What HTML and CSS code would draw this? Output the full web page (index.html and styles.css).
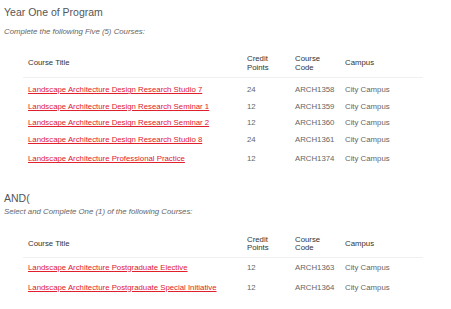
FILE: index.html
```html
<!DOCTYPE html>
<html>
<head>
<meta charset="utf-8">
<link rel="stylesheet" href="styles.css">
</head>
<body>
<h2 class="title">Year One of Program</h2>
<p class="intro">Complete the following Five (5) Courses:</p>
<table class="courses t1">
  <colgroup><col class="c1"><col class="c2"><col class="c3"><col class="c4"></colgroup>
  <thead>
    <tr><th>Course Title</th><th>Credit<br>Points</th><th>Course<br>Code</th><th>Campus</th></tr>
  </thead>
  <tbody>
    <tr><td><a href="#">Landscape Architecture Design Research Studio 7</a></td><td>24</td><td>ARCH1358</td><td>City Campus</td></tr>
    <tr><td><a href="#">Landscape Architecture Design Research Seminar 1</a></td><td>12</td><td>ARCH1359</td><td>City Campus</td></tr>
    <tr><td><a href="#">Landscape Architecture Design Research Seminar 2</a></td><td>12</td><td>ARCH1360</td><td>City Campus</td></tr>
    <tr><td><a href="#">Landscape Architecture Design Research Studio 8</a></td><td>24</td><td>ARCH1361</td><td>City Campus</td></tr>
    <tr class="last"><td><a href="#">Landscape Architecture Professional Practice</a></td><td>12</td><td>ARCH1374</td><td>City Campus</td></tr>
  </tbody>
</table>
<h2 class="title and">AND(</h2>
<p class="intro intro2">Select and Complete One (1) of the following Courses:</p>
<table class="courses t2">
  <colgroup><col class="c1"><col class="c2"><col class="c3"><col class="c4"></colgroup>
  <thead>
    <tr><th>Course Title</th><th>Credit<br>Points</th><th>Course<br>Code</th><th>Campus</th></tr>
  </thead>
  <tbody>
    <tr><td><a href="#">Landscape Architecture Postgraduate Elective</a></td><td>12</td><td>ARCH1363</td><td>City Campus</td></tr>
    <tr><td><a href="#">Landscape Architecture Postgraduate Special Initiative</a></td><td>12</td><td>ARCH1364</td><td>City Campus</td></tr>
  </tbody>
</table>
</body>
</html>
```
FILE: styles.css
```css
html, body {
  margin: 0;
  padding: 0;
  background: #fff;
}
body {
  padding: 0 4px;
  font-family: "Liberation Sans", Arial, sans-serif;
  font-size: 7.8px;
  color: #666;
}
.title {
  margin: 5px 0 0;
  font-size: 10.5px;
  line-height: 14px;
  font-weight: normal;
  color: #555;
}
.intro {
  margin: 8px 0 0;
  font-style: italic;
  line-height: 10px;
  color: #666;
}
.courses {
  margin: 9.6px 0 0 19px;
  width: 400px;
  border-collapse: collapse;
  table-layout: fixed;
}
.c1 { width: 219px; }
.c2 { width: 48px; }
.c3 { width: 50px; }
.c4 { width: 83px; }
.courses th {
  text-align: left;
  font-weight: normal;
  color: #333;
  line-height: 8.7px;
  padding: 8.5px 5px 4.5px;
  border-bottom: 1px solid #f0f0f0;
  vertical-align: middle;
}
.courses td {
  line-height: 9px;
  padding: 3.85px 5px;
  white-space: nowrap;
  vertical-align: middle;
}
.t1 tbody tr:first-child td { padding-top: 7.1px; }
.t1 tr.last td { padding-top: 6.45px; }
.courses a {
  color: #e0202c;
  text-decoration: underline;
}
.and {
  margin-top: 24px;
}
.intro2 {
  margin-top: 2px;
}
.t2 { margin-top: 9.8px; }
.t2 td { padding: 5.5px 5px; }
.t2 tbody tr:first-child td { padding-top: 4.1px; }
```
